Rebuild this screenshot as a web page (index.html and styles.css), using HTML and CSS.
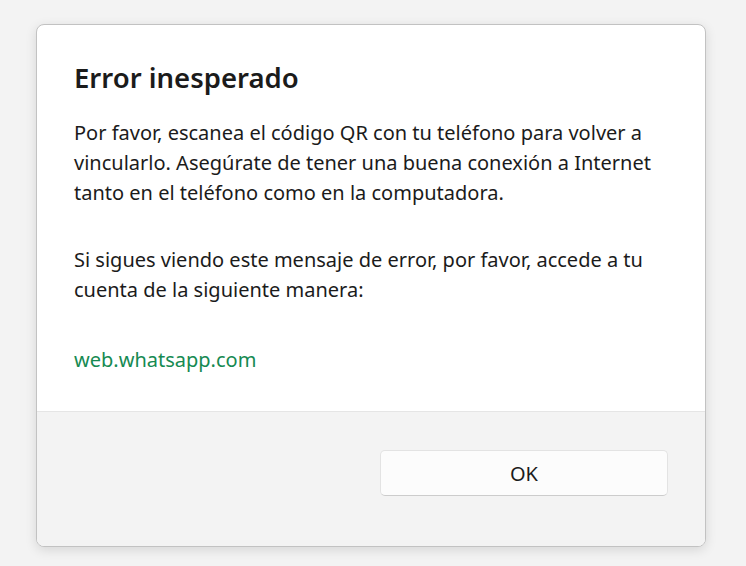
FILE: index.html
```html
<!DOCTYPE html>
<html lang="es">
<head>
<meta charset="utf-8">
<title>Error inesperado</title>
<link rel="stylesheet" href="styles.css">
</head>
<body>
<div class="dialog">
  <div class="content">
    <h1 class="title">Error inesperado</h1>
    <p class="text">Por favor, escanea el código QR con tu teléfono para volver a vincularlo. Asegúrate de tener una buena conexión a Internet tanto en el teléfono como en la computadora.</p>
    <p class="text">Si sigues viendo este mensaje de error, por favor, accede a tu cuenta de la siguiente manera:</p>
    <a class="link" href="#">web.whatsapp.com</a>
  </div>
  <div class="footer">
    <button class="btn">OK</button>
  </div>
</div>
</body>
</html>
```
FILE: styles.css
```css
html, body {
  margin: 0;
  padding: 0;
  background: #f3f3f3;
  height: 100%;
}
body {
  padding: 24px 40px 19px 36px;
  box-sizing: border-box;
  font-family: "Noto Sans", "Open Sans", sans-serif;
  color: #1b1b1b;
}
.dialog {
  width: 670px;
  height: 523px;
  box-sizing: border-box;
  border: 1px solid #c2c2c2;
  border-radius: 8px;
  background: #fff;
  box-shadow: 0 3px 12px rgba(0,0,0,0.12);
  display: flex;
  flex-direction: column;
  overflow: hidden;
}
.content {
  flex: 1;
  padding: 35px 37px 0 37px;
  display: flex;
  flex-direction: column;
  align-items: flex-start;
}
.title {
  margin: 0 0 22px 0;
  font-size: 27.5px;
  font-weight: 600;
  line-height: 36px;
}
.text {
  margin: 0 0 37px 0;
  font-size: 20px;
  line-height: 30px;
}
.text + .text {
  margin-bottom: 40px;
}
.link {
  font-size: 20px;
  line-height: 30px;
  color: #168a52;
  text-decoration: none;
}
.footer {
  height: 135px;
  flex: none;
  border-top: 1px solid #e5e5e5;
  background: #f3f3f3;
  display: flex;
  justify-content: flex-end;
  align-items: flex-start;
  padding: 38px 37px 0 0;
  box-sizing: border-box;
}
.btn {
  width: 288px;
  height: 46px;
  border: 1px solid #e3e3e3;
  border-bottom-color: #cccccc;
  border-radius: 5px;
  background: #fcfcfc;
  font-family: inherit;
  font-size: 20px;
  color: #1b1b1b;
}
```
